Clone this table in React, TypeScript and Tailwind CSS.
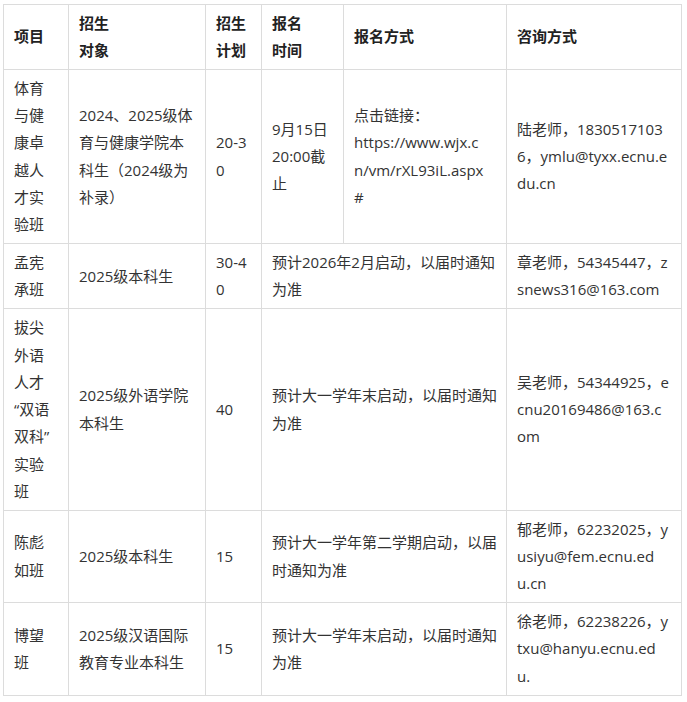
import React from 'react';

type Row = {
  name: string[];
  target: string[];
  plan: string[];
  time?: string[];
  method?: string[];
  merged?: string[];
  contact: string[];
};

const rows: Row[] = [
  {
    name: ['体育', '与健', '康卓', '越人', '才实', '验班'],
    target: ['2024、2025级体', '育与健康学院本', '科生（2024级为', '补录）'],
    plan: ['20-3', '0'],
    time: ['9月15日', '20:00截', '止'],
    method: ['点击链接：', 'https://www.wjx.c', 'n/vm/rXL93iL.aspx', '#'],
    contact: ['陆老师，1830517103', '6，ymlu@tyxx.ecnu.e', 'du.cn'],
  },
  {
    name: ['孟宪', '承班'],
    target: ['2025级本科生'],
    plan: ['30-4', '0'],
    merged: ['预计2026年2月启动，以届时通知', '为准'],
    contact: ['章老师，54345447，z', 'snews316@163.com'],
  },
  {
    name: ['拔尖', '外语', '人才', '“双语', '双科”', '实验', '班'],
    target: ['2025级外语学院', '本科生'],
    plan: ['40'],
    merged: ['预计大一学年末启动，以届时通知', '为准'],
    contact: ['吴老师，54344925，e', 'cnu20169486@163.c', 'om'],
  },
  {
    name: ['陈彪', '如班'],
    target: ['2025级本科生'],
    plan: ['15'],
    merged: ['预计大一学年第二学期启动，以届', '时通知为准'],
    contact: ['郁老师，62232025，y', 'usiyu@fem.ecnu.ed', 'u.cn'],
  },
  {
    name: ['博望', '班'],
    target: ['2025级汉语国际', '教育专业本科生'],
    plan: ['15'],
    merged: ['预计大一学年末启动，以届时通知', '为准'],
    contact: ['徐老师，62238226，y', 'txu@hanyu.ecnu.ed', 'u.'],
  },
];

const Lines: React.FC<{ lines: string[] }> = ({ lines }) => (
  <>
    {lines.map((l, i) => (
      <div key={i} className="whitespace-nowrap">
        {l}
      </div>
    ))}
  </>
);

const td = 'border border-[#dcdcdc] px-[10px] py-[4.75px] align-middle';

export default function App() {
  return (
    <div
      className="bg-white pl-[3px] pt-[4px] text-[15px] leading-[27.3px] text-[#333]"
      style={{ fontFamily: '"Open Sans", "Noto Sans CJK SC", sans-serif' }}
    >
      <table className="table-fixed border-collapse w-[678px]">
        <colgroup>
          <col className="w-[65px]" />
          <col className="w-[137px]" />
          <col className="w-[56px]" />
          <col className="w-[82px]" />
          <col className="w-[163px]" />
          <col className="w-[175px]" />
        </colgroup>
        <thead>
          <tr className="font-bold text-[#222]">
            <th className={`${td} text-left`}>项目</th>
            <th className={`${td} text-left`}>
              <Lines lines={['招生', '对象']} />
            </th>
            <th className={`${td} text-left`}>
              <Lines lines={['招生', '计划']} />
            </th>
            <th className={`${td} text-left`}>
              <Lines lines={['报名', '时间']} />
            </th>
            <th className={`${td} text-left`}>报名方式</th>
            <th className={`${td} text-left`}>咨询方式</th>
          </tr>
        </thead>
        <tbody>
          {rows.map((r, i) => (
            <tr key={i}>
              <td className={td}>
                <Lines lines={r.name} />
              </td>
              <td className={td}>
                <Lines lines={r.target} />
              </td>
              <td className={td}>
                <Lines lines={r.plan} />
              </td>
              {r.merged ? (
                <td className={td} colSpan={2}>
                  <Lines lines={r.merged} />
                </td>
              ) : (
                <>
                  <td className={td}>
                    <Lines lines={r.time!} />
                  </td>
                  <td className={td}>
                    <Lines lines={r.method!} />
                  </td>
                </>
              )}
              <td className={td}>
                <Lines lines={r.contact} />
              </td>
            </tr>
          ))}
        </tbody>
      </table>
    </div>
  );
}
